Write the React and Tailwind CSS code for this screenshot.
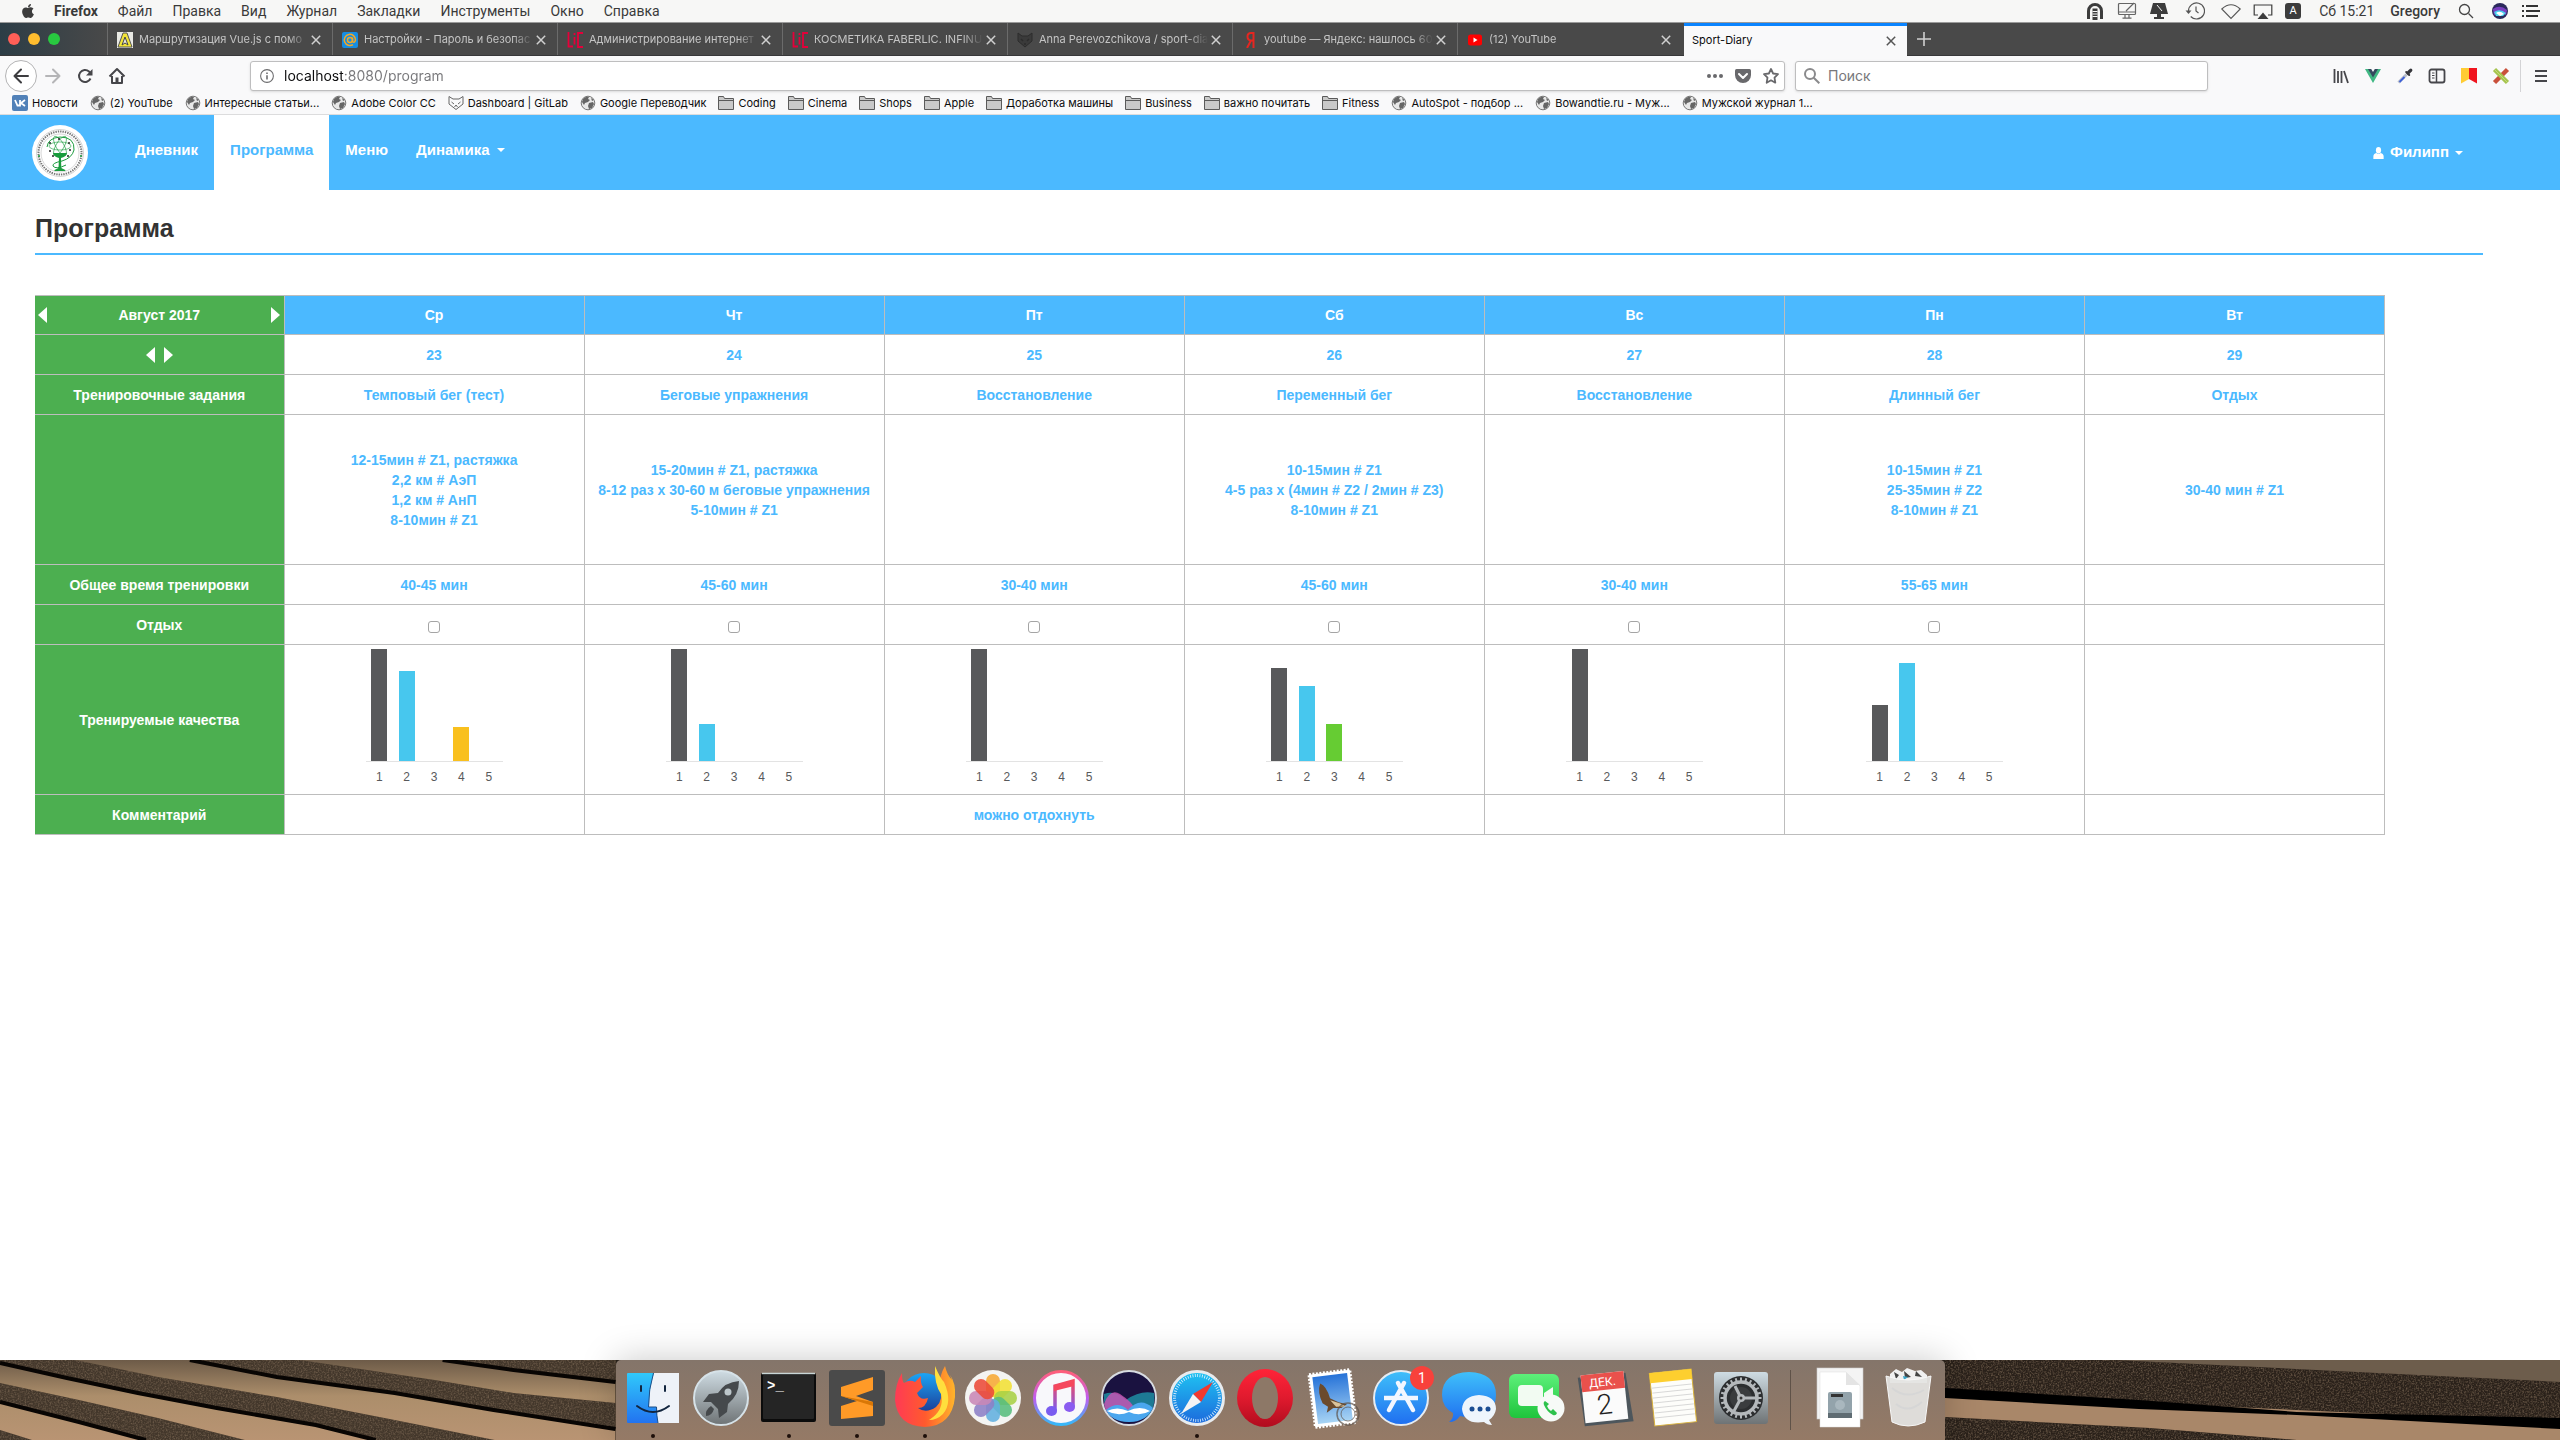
import React from "react";
import { FaApple } from "react-icons/fa";

const MENU = ["Файл", "Правка", "Вид", "Журнал", "Закладки", "Инструменты", "Окно", "Справка"];

/* ---------- menu bar ---------- */

function StatusIcons() {
  const c = "h-[18px] w-5";
  return (
    <div className="flex items-center gap-3 text-[#3c3c3c]">
      <svg viewBox="0 0 20 18" className={c} fill="none" stroke="#3c3c3c">
        <path d="M3.500 17V9a6.500 6.500 0 0 1 13 0v8" strokeWidth="3" />
        <path d="M10 6.500V18" strokeWidth="5" />
        <path d="M7.500 9.500h5M7.500 12h5M7.500 14.500h5" stroke="#f6f6f6" strokeWidth="1" />
      </svg>
      <svg viewBox="0 0 20 18" className={c} fill="none" stroke="#666" strokeWidth="1.2">
        <rect x="1.5" y="1.5" width="17" height="11" rx="1" />
        <path d="M2 10h16M8 12.5v3M12 12.5v3M5.5 16.2h9M9 9l8-8" />
      </svg>
      <svg viewBox="0 0 20 18" className={c} fill="#3c3c3c">
        <path d="M4 1h12l3 11H1z" />
        <path d="M8 12h4v3h3v2H5v-2h3z" />
        <path d="M8 3l5 6" stroke="#f6f6f6" />
      </svg>
      <svg viewBox="0 0 20 18" className="ml-1 h-[18px] w-5" fill="none" stroke="#555" strokeWidth="1.2">
        <path d="M3.5 9a8 8 0 1 1 2.2 5.5M11 4.5V9l2.5 2" />
        <path d="M.5 8.5h6l-3 3.5z" fill="#555" stroke="none" />
      </svg>
      <svg viewBox="0 0 20 18" className="ml-1 h-[18px] w-5" fill="none" stroke="#555" strokeWidth="1.1">
        <path d="M.8 7Q10-1.500 19.200 7L10 16.500z" />
      </svg>
      <svg viewBox="0 0 20 18" className={c} fill="none" stroke="#3c3c3c" strokeWidth="1.200">
        <path d="M5 13H1.200V3h17.600v10H15" />
        <path d="M10 10.500l5.500 6.500h-11z" fill="#3c3c3c" stroke="none" />
      </svg>
      <span className="flex size-4 items-center justify-center rounded-[3px] bg-[#3c3c3c] text-[11px] leading-4 text-white">A</span>
    </div>
  );
}

function MenuBar() {
  return (
    <div className="flex h-[23px] items-center border-b border-[#9a9a9a] bg-[#f7f7f6] pr-5 pl-5 text-[14px] leading-[22px] text-[#3a3a3a]">
      <FaApple className="size-4 shrink-0 text-[#3c3c3c]" />
      <nav className="ml-[18px] flex gap-5 font-['Roboto','Liberation_Sans',sans-serif]">
        <button className="font-bold">Firefox</button>
        {MENU.map((m) => (
          <button key={m}>{m}</button>
        ))}
      </nav>
      <div className="ml-auto flex items-center font-['Roboto','Liberation_Sans',sans-serif]">
        <StatusIcons />
        <span className="ml-[18px]">Сб 15:21</span>
        <span className="ml-4 font-medium">Gregory</span>
        <svg viewBox="0 0 16 16" className="ml-[18px] size-4" fill="none" stroke="#444" strokeWidth="1.300">
          <circle cx="6.500" cy="6.500" r="5" />
          <path d="M10.500 10.500L15 15" />
        </svg>
        <svg viewBox="0 0 16 16" className="ml-[18px] size-4">
          <circle cx="8" cy="8" r="8" fill="#2b2a5c" />
          <path d="M1 6q7-5 14 1l-1 5q-6-5-12 0z" fill="#7a3fc0" />
          <path d="M2 9q6-4 12 1l-3 3H4z" fill="#49d0ee" />
          <path d="M4 10q4-3 8 1l-4 2z" fill="#fff" />
        </svg>
        <svg viewBox="0 0 18 12" className="ml-[14px] h-3 w-[18px]" stroke="#333" strokeWidth="1.800">
          <path d="M0 1h2M4 1h12M0 6h2M4 6h14M0 11h2M4 11h12" />
        </svg>
      </div>
    </div>
  );
}

/* ---------- tabs ---------- */

const FavVue = (
  <svg viewBox="0 0 16 16" className="size-4 shrink-0">
    <rect width="16" height="16" fill="#e9e9e4" />
    <path d="M6 1h4l5 14H1z" fill="#f3e53a" stroke="#555" />
    <path d="M8 5l3 8-3-2-3 2z" fill="#e9e9e4" stroke="#444" />
  </svg>
);
const FavMail = (
  <svg viewBox="0 0 16 16" className="size-4 shrink-0">
    <rect width="16" height="16" rx="2" fill="#168de2" />
    <g fill="none" stroke="#f7a823" strokeWidth="1.500">
      <circle cx="8" cy="8" r="2.500" />
      <path d="M10.500 5.500v4q2 2 3-1.500a5.600 5.600 0 1 0-2.500 4.600" />
    </g>
  </svg>
);
const FavLic = (
  <svg viewBox="0 0 16 16" className="size-4 shrink-0" fill="none" stroke="#e4003a" strokeWidth="1.800">
    <path d="M1.500 0v14.500H6M7.500 5v7.500M7.500 1v2M16 1h-5v14h5" />
  </svg>
);
const FavFox = (
  <svg viewBox="0 0 16 16" className="size-4 shrink-0" fill="none" stroke="#2c2c2c">
    <path d="M1 1l4 3h6l4-3v8l-7 6-7-6z" fill="#3a3a3a" />
    <path d="M4 7l2 2M12 7l-2 2M7 12h2" strokeWidth="1.500" />
  </svg>
);
const FavYa = (
  <svg viewBox="0 0 16 16" className="size-4 shrink-0" fill="none" stroke="#e52620" strokeWidth="2">
    <path d="M11.500 16V1H9Q5.500 1 5.500 4.500T9 8.500h2M9 8.500L5 16" />
  </svg>
);
const FavYt = (
  <svg viewBox="0 0 16 16" className="size-4 shrink-0">
    <rect x="1" y="2.500" width="14" height="11" rx="2.500" fill="#f00" />
    <path d="M6.500 5.500v5l4-2.500z" fill="#fff" />
  </svg>
);

const TABS = [
  { icon: FavVue, title: "Маршрутизация Vue.js с помо" },
  { icon: FavMail, title: "Настройки - Пароль и безопас" },
  { icon: FavLic, title: "Администрирование интернет" },
  { icon: FavLic, title: "КОСМЕТИКА FABERLIC. INFINU" },
  { icon: FavFox, title: "Anna Perevozchikova / sport-dia" },
  { icon: FavYa, title: "youtube — Яндекс: нашлось 60" },
  { icon: FavYt, title: "(12) YouTube" },
];

function CloseX({ label, className }) {
  return (
    <button aria-label={label} className="flex size-4 shrink-0 items-center justify-center">
      <svg viewBox="0 0 10 10" className={className} stroke="currentColor" strokeWidth="1.500">
        <path d="M.8.8l8.400 8.400M9.200.8L.8 9.200" />
      </svg>
    </button>
  );
}

function TabBar() {
  return (
    <div className="flex h-[33px] border-b border-[#38383a] bg-[#494949] text-[11px]">
      <div className="flex w-[107px] shrink-0 items-center gap-2 bg-linear-to-r from-[#2c3d46] to-[#494949] pl-2">
        <button aria-label="Закрыть" className="size-3 rounded-full bg-[#ff5f57]" />
        <button aria-label="Свернуть" className="size-3 rounded-full bg-[#ffbd2e]" />
        <button aria-label="Развернуть" className="size-3 rounded-full bg-[#28c940]" />
      </div>
      {TABS.map((t, i) => (
        <div key={i} className="flex w-[225px] min-w-0 items-center border-l border-[#6b6b6b] pt-px pr-2 pl-[9px] text-[#c4c4c4]">
          {t.icon}
          <span className="ml-[6px] flex-1 overflow-hidden mask-r-from-88% whitespace-nowrap">{t.title}</span>
          <CloseX label="Закрыть вкладку" className="size-[10px] text-[#d0d0d0]" />
        </div>
      ))}
      <div className="-mb-px ml-[2px] flex w-[223px] min-w-0 items-center border-t-[3px] border-[#0a84ff] bg-[#f9f9fa] pr-2 pb-px pl-2 text-[#0c0c0d]">
        <span className="flex-1">Sport-Diary</span>
        <CloseX label="Закрыть вкладку" className="size-[10px] text-[#555]" />
      </div>
      <button aria-label="Новая вкладка" className="ml-[10px] flex items-center text-[#d0d0d0]">
        <svg viewBox="0 0 14 14" className="size-[14px]" stroke="currentColor" strokeWidth="1.600">
          <path d="M7 0v14M0 7h14" />
        </svg>
      </button>
    </div>
  );
}

/* ---------- toolbar ---------- */

function ToolButton({ label, children }) {
  return (
    <button aria-label={label} className="flex size-8 shrink-0 items-center justify-center">
      <svg viewBox="0 0 16 16" className="size-4 overflow-visible" fill="none" stroke="#46464a" strokeWidth="2">
        {children}
      </svg>
    </button>
  );
}

function Toolbar() {
  return (
    <div className="flex h-[39px] items-center bg-[#f9f9fa] pr-[3px] pl-[5px]">
      <button aria-label="Назад" className="flex size-8 shrink-0 items-center justify-center rounded-full border border-[#b4b4b5] bg-white">
        <svg viewBox="0 0 16 16" className="size-4" fill="none" stroke="#3d3d40" strokeWidth="2" strokeLinecap="round" strokeLinejoin="round">
          <path d="M15 8H1.500M8 1.500L1.500 8 8 14.500" />
        </svg>
      </button>
      <ToolButton label="Вперёд">
        <path d="M1 8h13.500M8 1.500L14.500 8 8 14.500" stroke="#b5b5b7" strokeLinecap="round" strokeLinejoin="round" />
      </ToolButton>
      <ToolButton label="Обновить">
        <path d="M13.500 10.500A6 6 0 1 1 12 3.500L14 6" />
        <path d="M15.500 1v6.500H9z" fill="#46464a" stroke="none" />
      </ToolButton>
      <ToolButton label="Домой">
        <path d="M.5 8.500L8 1l7.500 7.500M3 8v7h10V8" strokeLinejoin="round" />
        <path d="M8 15V9.500" strokeWidth="3" />
      </ToolButton>

      <div className="ml-[117px] flex h-[30px] min-w-0 flex-1 items-center rounded-[3px] border border-[#bebebf] bg-white pr-[5px] pl-[9px] shadow-sm">
        <svg viewBox="0 0 16 16" className="size-[14px] shrink-0" fill="none" stroke="#6b6b6d" strokeWidth="1.200">
          <circle cx="8" cy="8" r="7.300" />
          <path d="M8 7v5M8 4v1.800" strokeWidth="1.800" />
        </svg>
        <input
          aria-label="Адрес"
          defaultValue="localhost:8080/program"
          className="ml-[10px] min-w-0 flex-1 bg-[linear-gradient(90deg,#0c0c0d_59px,#77777a_59px)] bg-clip-text text-[14px] leading-5 text-transparent outline-none"
        />
        <div className="flex items-center gap-3 text-[#69696c]">
          <button aria-label="Действия">
            <svg viewBox="0 0 16 16" className="size-4" fill="currentColor">
              <circle cx="2" cy="8" r="2" />
              <circle cx="8" cy="8" r="2" />
              <circle cx="14" cy="8" r="2" />
            </svg>
          </button>
          <button aria-label="Pocket">
            <svg viewBox="0 0 16 16" className="size-4">
              <path d="M1.500 1h13Q16 1 16 2.500V7a8 8 0 0 1-16 0V2.500Q0 1 1.500 1z" fill="currentColor" />
              <path d="M4 6l4 4 4-4" fill="none" stroke="#fff" strokeWidth="2" strokeLinecap="round" strokeLinejoin="round" />
            </svg>
          </button>
          <button aria-label="В закладки">
            <svg viewBox="0 0 16 16" className="size-4" fill="none" stroke="currentColor" strokeWidth="1.800" strokeLinejoin="round">
              <path d="M8 1l2.100 4.500 4.900.7-3.500 3.500.8 5L8 12.300 3.700 14.700l.8-5L1 6.200l4.900-.7z" />
            </svg>
          </button>
        </div>
      </div>

      <div className="ml-[10px] flex h-[30px] w-[413px] items-center rounded-[3px] border border-[#bebebf] bg-white pl-2 shadow-sm">
        <svg viewBox="0 0 16 16" className="size-4 shrink-0" fill="none" stroke="#8a8a8c" strokeWidth="2">
          <circle cx="6" cy="6" r="5" />
          <path d="M9.700 9.700L15.300 15.300" />
        </svg>
        <input aria-label="Поиск" placeholder="Поиск" className="ml-2 min-w-0 flex-1 text-[14px] leading-5 outline-none placeholder:text-[#77777a]" />
      </div>

      <div className="ml-[117px] flex items-center">
        <ToolButton label="Библиотека">
          <path d="M1.500 1v14M5 3v12M8.500 3v12M11 3l4 12" strokeWidth="1.800" />
        </ToolButton>
        <ToolButton label="Vue">
          <path d="M0 1h4l4 7 4-7h4L8 15z" fill="#41b883" stroke="none" />
          <path d="M3 1h3.200L8 4l1.800-3H13L8 9.500z" fill="#35495e" stroke="none" />
        </ToolButton>
        <ToolButton label="Пипетка">
          <path d="M1.500 14.500l8-8" stroke="#b9bec9" strokeWidth="3" />
          <path d="M2.500 14l5-5" stroke="#3f62d8" strokeWidth="1.800" />
          <path d="M9.200 4l3 3" stroke="#37373c" strokeWidth="2" strokeLinecap="round" />
          <path d="M11 5L13.800 2.200" stroke="#37373c" strokeWidth="3.200" strokeLinecap="round" />
        </ToolButton>
        <ToolButton label="Боковая панель">
          <rect x=".5" y="1.500" width="15" height="13" rx="2" strokeWidth="1.800" />
          <path d="M7.500 2v12" strokeWidth="1.500" />
          <path d="M3 5h2.500M3 7.500h2.500M3 10h2.500" strokeWidth="1" />
        </ToolButton>
        <ToolButton label="Закладка">
          <path d="M0 0h8v11L0 15.500z" fill="#ffcc33" stroke="none" />
          <path d="M8 0h8v15.500L8 11z" fill="#f0141e" stroke="none" />
        </ToolButton>
        <ToolButton label="Расширение">
          <path d="M1.500 14.500L14.500 1.500" stroke="#c9503a" strokeWidth="4.500" />
          <path d="M1.500 1.500l13 13" stroke="#a6c44e" strokeWidth="4.500" />
          <path d="M2 2l12 12" stroke="#c3d97a" strokeWidth="1" />
        </ToolButton>
      </div>
      <div className="mr-1 ml-[3px] h-8 w-px bg-[#d4d4d6]" />
      <ToolButton label="Меню">
        <path d="M2 3h12M2 8h12M2 13h12" />
      </ToolButton>
    </div>
  );
}

/* ---------- bookmarks ---------- */

const Globe = (
  <svg viewBox="0 0 16 16" className="size-4 shrink-0">
    <circle cx="8" cy="8" r="6.800" fill="#e8e8e8" stroke="#777" strokeWidth="1" />
    <path d="M3 4q3-3 6-2L8 4l2 1-2 2-3 1-1 2-2-3zM9 8l4-1 1 2-2 4-3 1-1-3zM11 3l3 2-2 1z" fill="#666" />
  </svg>
);
const Folder = (
  <svg viewBox="0 0 16 16" className="size-4 shrink-0" fill="#c9c9c9" stroke="#5a5a5a" strokeWidth="1">
    <path d="M.5 14.500v-13h5l1 2h9v11z" />
    <path d="M.5 5.500h15" />
  </svg>
);
const Vk = (
  <svg viewBox="0 0 16 16" className="size-4 shrink-0">
    <rect width="16" height="16" rx="2" fill="#5181b8" />
    <path d="M3 5l2.500 5.500H8V5M13 5L9 8l4 3" fill="none" stroke="#fff" strokeWidth="1.800" />
  </svg>
);
const Gitlab = (
  <svg viewBox="0 0 16 16" className="size-4 shrink-0" fill="none" stroke="#666" strokeWidth="1">
    <path d="M1 1.500L5 4h6l4-2.500V9l-7 5.500L1 9zM3.500 7L6 9M12.500 7L10 9M6.500 12L8 10l1.500 2" />
  </svg>
);

const BOOKMARKS = [
  [Vk, "Новости"],
  [Globe, "(2) YouTube"],
  [Globe, "Интересные статьи..."],
  [Globe, "Adobe Color CC"],
  [Gitlab, "Dashboard | GitLab"],
  [Globe, "Google Переводчик"],
  [Folder, "Coding"],
  [Folder, "Cinema"],
  [Folder, "Shops"],
  [Folder, "Apple"],
  [Folder, "Доработка машины"],
  [Folder, "Business"],
  [Folder, "важно почитать"],
  [Folder, "Fitness"],
  [Globe, "AutoSpot - подбор ..."],
  [Globe, "Bowandtie.ru - Муж..."],
  [Globe, "Мужской журнал 1..."],
];

function Bookmarks() {
  return (
    <div className="flex h-5 items-center gap-3 border-b border-[#dcdcdd] bg-[#f9f9fa] pb-[4px] pl-3 text-[11px] leading-4 text-[#0c0c0d]">
      {BOOKMARKS.map(([icon, label]) => (
        <button key={label} className="flex items-center gap-1 whitespace-nowrap">
          {icon}
          {label}
        </button>
      ))}
    </div>
  );
}

/* ---------- site ---------- */

function Logo() {
  return (
    <svg viewBox="0 0 56 56" className="size-14 shrink-0">
      <circle cx="28" cy="28" r="28" fill="#fff" />
      <circle cx="28" cy="28" r="23.500" fill="none" stroke="#b9b9b9" strokeWidth=".6" />
      <circle cx="28" cy="28" r="21.500" fill="none" stroke="#777" strokeWidth="2" strokeDasharray="1.400 1" />
      <circle cx="28" cy="28" r="19" fill="none" stroke="#bbb" strokeWidth=".6" />
      <circle cx="7" cy="31" r="1" fill="#1a9c3d" />
      <circle cx="49" cy="31" r="1" fill="#1a9c3d" />
      <g fill="none" stroke="#1a9c3d" strokeWidth=".6">
        <ellipse cx="28" cy="21" rx="11" ry="4" />
        <ellipse cx="28" cy="21" rx="11" ry="4" transform="rotate(60 28 21)" />
        <ellipse cx="28" cy="21" rx="11" ry="4" transform="rotate(120 28 21)" />
        <path d="M15 22Q16 13 28 12q15 0 14 13-2 8-12 11-10 2-9 5 3 4 13-1" strokeWidth="1" />
      </g>
      <path d="M21 28h14q-1 4-6 5l.3 10 4 2v1H22.500v-1l4-2 .5-10q-5-1-6-5z" fill="#1a9c3d" />
      <g fill="#222">
        <circle cx="18" cy="18" r="1" />
        <circle cx="27" cy="14" r="1" />
        <circle cx="37" cy="18" r="1" />
        <circle cx="38" cy="25" r="1" />
        <circle cx="18" cy="26" r="1" />
        <circle cx="21" cy="31" r="1" />
        <circle cx="36" cy="31" r="1" />
      </g>
    </svg>
  );
}

function Caret() {
  return (
    <svg viewBox="0 0 8 4" className="h-1 w-2" fill="currentColor">
      <path d="M0 0h8L4 4z" />
    </svg>
  );
}

function SiteNav() {
  return (
    <header className="flex h-[75px] bg-[#4bb9ff] pr-[97px] pl-8 text-[15px] font-bold text-white">
      <a href="#home" aria-label="Sport-Diary" className="flex items-center">
        <Logo />
      </a>
      <nav className="ml-[31px] flex leading-[70px]">
        <a href="#diary" className="px-4">Дневник</a>
        <a href="#program" className="bg-white px-4 text-[#4bb9ff]">Программа</a>
        <a href="#menu" className="px-4">Меню</a>
        <button className="flex items-center gap-[7px] px-3 pb-[5px]">
          Динамика
          <Caret />
        </button>
      </nav>
      <button className="ml-auto flex items-center gap-[6px]">
        <svg viewBox="0 0 12 14" className="h-3 w-[11px]" fill="currentColor">
          <ellipse cx="6" cy="3.800" rx="3" ry="3.800" />
          <path d="M0 14v-3q0-3 3.500-4 2.500 2 5 0Q12 8 12 11v3z" />
        </svg>
        Филипп
        <Caret />
      </button>
    </header>
  );
}

const DAYS = [
  { d: "Ср", n: 23, t: "Темповый бег (тест)", p: ["12-15мин # Z1, растяжка", "2,2 км # АэП", "1,2 км # АнП", "8-10мин # Z1"], time: "40-45 мин", bars: [112, 90, 0, 34, 0] },
  { d: "Чт", n: 24, t: "Беговые упражнения", p: ["15-20мин # Z1, растяжка", "8-12 раз x 30-60 м беговые упражнения", "5-10мин # Z1"], time: "45-60 мин", bars: [112, 37, 0, 0, 0] },
  { d: "Пт", n: 25, t: "Восстановление", p: [], time: "30-40 мин", bars: [112, 0, 0, 0, 0], note: "можно отдохнуть" },
  { d: "Сб", n: 26, t: "Переменный бег", p: ["10-15мин # Z1", "4-5 раз x (4мин # Z2 / 2мин # Z3)", "8-10мин # Z1"], time: "45-60 мин", bars: [93, 75, 37, 0, 0] },
  { d: "Вс", n: 27, t: "Восстановление", p: [], time: "30-40 мин", bars: [112, 0, 0, 0, 0] },
  { d: "Пн", n: 28, t: "Длинный бег", p: ["10-15мин # Z1", "25-35мин # Z2", "8-10мин # Z1"], time: "55-65 мин", bars: [56, 98, 0, 0, 0] },
  { d: "Вт", n: 29, t: "Отдых", p: ["30-40 мин # Z1"] },
];

const BAR_COLORS = ["bg-[#58595b]", "bg-[#47c7ee]", "bg-[#66cc33]", "bg-[#f9c01e]", "bg-[#e8452c]"];

function Chart({ bars }) {
  return (
    <div className="mx-auto w-[137px] pt-[2px] text-[12px] font-normal text-[#58595b]">
      <div className="grid h-[113px] grid-cols-5 items-end justify-items-center border-b border-[#e3e3e3]">
        {bars.map((h, i) => (
          <div key={i} className={`w-4 ${BAR_COLORS[i]}`} style={{ height: h }} />
        ))}
      </div>
      <div className="grid h-[30px] grid-cols-5 text-center leading-[30px]">
        {bars.map((_, i) => (
          <span key={i}>{i + 1}</span>
        ))}
      </div>
    </div>
  );
}

function Arrow({ dir, label }) {
  return (
    <button aria-label={label}>
      <svg viewBox="0 0 9 16" className="block h-4 w-[9px]" fill="#fff">
        <path d={dir === "left" ? "M9 0v16L0 8z" : "M0 0v16l9-8z"} />
      </svg>
    </button>
  );
}

const CELL = "border border-[#bdbdbd] p-0";
const HEAD = "border-y border-r border-[#bdbdbd] bg-[#4caf50] p-0 text-white font-bold";

function Program() {
  return (
    <main className="flex-1 bg-white pr-[77px] pb-8 pl-[35px]">
      <h1 className="border-b-2 border-[#4bb9ff] pt-6 pb-[10px] text-[25px] leading-[29px] font-bold text-[#333]">Программа</h1>
      <table className="mt-10 w-[96%] table-fixed border-collapse text-center text-[14px] leading-5 font-bold text-[#4bb9ff]">
        <colgroup>
          <col className="w-[249px]" />
          <col span="7" />
        </colgroup>
        <thead>
          <tr className="h-[39px] text-white">
            <th scope="col" className={HEAD}>
              <div className="flex items-center justify-between px-[3px]">
                <Arrow dir="left" label="Предыдущий месяц" />
                Август 2017
                <Arrow dir="right" label="Следующий месяц" />
              </div>
            </th>
            {DAYS.map((x) => (
              <th key={x.n} scope="col" className="border border-[#bdbdbd] bg-[#4bb9ff] p-0">{x.d}</th>
            ))}
          </tr>
        </thead>
        <tbody>
          <tr className="h-10">
            <th scope="row" className={HEAD}>
              <div className="flex justify-center gap-[9px]">
                <Arrow dir="left" label="Предыдущая неделя" />
                <Arrow dir="right" label="Следующая неделя" />
              </div>
            </th>
            {DAYS.map((x) => <td key={x.n} className={CELL}>{x.n}</td>)}
          </tr>
          <tr className="h-10">
            <th scope="row" className={HEAD}>Тренировочные задания</th>
            {DAYS.map((x) => <td key={x.n} className={CELL}>{x.t}</td>)}
          </tr>
          <tr className="h-[150px]">
            <th scope="row" className={HEAD} aria-label="План" />
            {DAYS.map((x) => (
              <td key={x.n} className={CELL}>
                {x.p.map((l) => <p key={l}>{l}</p>)}
              </td>
            ))}
          </tr>
          <tr className="h-10">
            <th scope="row" className={HEAD}>Общее время тренировки</th>
            {DAYS.map((x) => <td key={x.n} className={CELL}>{x.time}</td>)}
          </tr>
          <tr className="h-10">
            <th scope="row" className={HEAD}>Отдых</th>
            {DAYS.map((x) => (
              <td key={x.n} className={CELL}>
                {x.bars && (
                  <input type="checkbox" aria-label={`Отдых, ${x.n}`} className="mx-auto mt-1 block size-3 appearance-none rounded-[3px] border border-[#a5a5a5] bg-white checked:bg-[#4bb9ff]" />
                )}
              </td>
            ))}
          </tr>
          <tr className="h-[150px]">
            <th scope="row" className={HEAD}>Тренируемые качества</th>
            {DAYS.map((x) => <td key={x.n} className={CELL}>{x.bars && <Chart bars={x.bars} />}</td>)}
          </tr>
          <tr className="h-10">
            <th scope="row" className={HEAD}>Комментарий</th>
            {DAYS.map((x) => <td key={x.n} className={CELL}>{x.note}</td>)}
          </tr>
        </tbody>
      </table>
    </main>
  );
}

/* ---------- desktop and dock ---------- */

function WallpaperLeft() {
  return (
    <svg viewBox="0 0 616 80" preserveAspectRatio="none" className="h-full min-w-0 flex-1">
      <defs>
        <linearGradient id="sand" x1="0" y1="0" x2="0" y2="1">
          <stop offset="0" stopColor="#6d5b48" />
          <stop offset=".45" stopColor="#ac8e6b" />
          <stop offset="1" stopColor="#b99473" />
        </linearGradient>
        <filter id="grain" x="0" y="0" width="100%" height="100%" colorInterpolationFilters="sRGB">
          <feTurbulence type="fractalNoise" baseFrequency=".6" numOctaves="2" seed="4" result="n" />
          <feColorMatrix in="n" type="matrix" values="0 0 0 0 .5  0 0 0 0 .42  0 0 0 0 .34  1.600 0 0 0 -.65" result="m" />
          <feComposite in="m" in2="SourceGraphic" operator="in" result="g" />
          <feMerge>
            <feMergeNode in="SourceGraphic" />
            <feMergeNode in="g" />
          </feMerge>
        </filter>
      </defs>
      <rect width="616" height="80" fill="url(#sand)" />
      <g fill="#43372b" filter="url(#grain)">
        <path d="M0 0h75q40 8 83 17l119 20 118 23 100 20H376L316 65 217 48 138 33 67 18 0 3z" />
        <path d="M190 0h110l135 20 79 13 102 10v26L494 50 395 33 277 17z" />
        <path d="M443 0h173v22L514 10z" />
        <path d="M0 23l79 17 79 18 87 22h-99L79 62 0 42z" />
        <path d="M0 70l32 10H0z" />
      </g>
      <g fill="none" stroke="#080503" strokeWidth="4">
        <path d="M0 3l67 15 71 15 79 15 99 17 60 15" />
        <path d="M190 0l87 17 118 16 99 17 122 19" />
        <path d="M443 0l71 10 102 12" />
        <path d="M0 42l79 20 67 18" />
      </g>
    </svg>
  );
}

function WallpaperRight() {
  return (
    <svg viewBox="0 0 616 80" preserveAspectRatio="none" className="h-full min-w-0 flex-1">
      <rect width="616" height="80" fill="#a98769" />
      <path d="M160 0h456v24L391 12z" fill="#6d5d4c" />
      <g fill="#2a211a" filter="url(#grain)">
        <path d="M0 0h170l221 11 225 11v40L0 34z" />
        <path d="M0 57l205 11 147 12H0z" />
      </g>
      <path d="M0 28l194 12 158 12 264 6v11L352 55 194 49 0 38z" fill="#000" />
    </svg>
  );
}

function Gear() {
  const teeth = Array.from({ length: 24 }, (_, i) => i * 15);
  return (
    <g>
      <circle cx="34" cy="38" r="22" fill="#2c2e30" />
      {teeth.map((a) => (
        <rect key={a} x="33" y="17.500" width="2" height="4" fill="#b4b8bb" transform={`rotate(${a} 34 38)`} />
      ))}
      <circle cx="34" cy="38" r="16" fill="none" stroke="#b4b8bb" strokeWidth="3.500" />
      <circle cx="34" cy="38" r="11" fill="#3a3c3e" />
      <path d="M34 38L28 26M34 38h15M34 38L27 51" stroke="#b4b8bb" strokeWidth="3" />
      <circle cx="34" cy="38" r="4" fill="#b4b8bb" />
      <circle cx="34" cy="38" r="1.500" fill="#333" />
    </g>
  );
}

const PETALS = ["#f7a833", "#f3e034", "#a8d046", "#58bd7c", "#62afdf", "#8c7fc6", "#c887b6", "#ec4a38"];

const APPS = [
  { name: "Finder", run: true, art: (
    <g>
      <rect x="8" y="13" width="52" height="50" rx="1" fill="url(#finder)" />
      <path d="M34 13h26v50H39q-1-7-1-9 0-3 0-7h-8q0-19 5-34z" fill="#eef2f8" />
      <path d="M34.500 13q-5 16-5 34h8q0 9 1.500 16" fill="none" stroke="#1d4f87" strokeWidth="1" />
      <path d="M22 26v5M46 26v5" stroke="#12263f" strokeWidth="2" strokeLinecap="round" />
      <path d="M18 46q16 12 32 0" fill="none" stroke="#12263f" strokeWidth="2" strokeLinecap="round" />
    </g>
  ) },
  { name: "Launchpad", art: (
    <g>
      <circle cx="34" cy="38" r="27" fill="url(#metal)" stroke="#d6e2e8" strokeWidth="2" />
      <path d="M52 21q-14 1-21 12l-9 1-6 8h8l7 7 1 9 8-6 1-8q11-9 11-23z" fill="#45494c" />
      <circle cx="41" cy="32" r="3.500" fill="#bcc6ca" />
      <path d="M24 46q-6 4-5 10 6 0 8-7z" fill="#45494c" />
    </g>
  ) },
  { name: "Терминал", run: true, art: (
    <g>
      <rect x="6" y="13" width="55" height="49" rx="2" fill="#0b0b0b" />
      <rect x="8" y="15" width="51" height="44" rx="1" fill="#252525" />
      <path d="M7 13.500h53" stroke="#c9d6d6" strokeWidth="1.500" />
      <text x="12" y="30" fill="#fff" fontSize="14" fontWeight="700" fontFamily="Liberation Mono, monospace">&gt;_</text>
    </g>
  ) },
  { name: "Sublime Text", run: true, art: (
    <g>
      <rect x="6" y="10" width="56" height="56" rx="3" fill="#4a4a4a" />
      <path d="M18 27l32-10v13l-17 6 17 6v14L18 59V46l16-5-16-5z" fill="#ff9a27" />
      <path d="M18 36l32 6v4l-16-5z" fill="#d97706" />
    </g>
  ) },
  { name: "Firefox", run: true, art: (
    <g>
      <circle cx="33" cy="36" r="23" fill="url(#sea)" />
      <path d="M11 13q0 8 2 10 6-4 11-1l6-6q-1 7 2 11l-6 6q3 8 11 5-2 10-10 10 8 6 18-1 8-7 4-21-1-10 5-20 2 9 7 14l-2-5q6 8 5 22-3 29-30 30Q6 66 4 40 4 24 11 13z" fill="url(#flame)" />
      <path d="M44 6q5 12 9 16 9 20-1 32-6 6-14 6 16-10 12-26-7-10-6-28z" fill="#ffdf3d" />
    </g>
  ) },
  { name: "Фото", art: (
    <g>
      <circle cx="34" cy="38" r="28" fill="#f4f4f2" />
      {PETALS.map((c, i) => (
        <rect key={c} x="27" y="14" width="14" height="23" rx="7" fill={c} fillOpacity=".88" transform={`rotate(${i * 45} 34 38)`} />
      ))}
    </g>
  ) },
  { name: "iTunes", art: (
    <g>
      <circle cx="34" cy="38" r="26.500" fill="#f8f8fb" stroke="url(#tunes)" strokeWidth="3" />
      <path d="M28 51V26l18-5v26" fill="none" stroke="url(#note)" strokeWidth="3.500" />
      <path d="M27 25l20-5v6l-20 5z" fill="#f5485d" />
      <ellipse cx="24.500" cy="51" rx="5.500" ry="5" fill="#7a5cf0" />
      <ellipse cx="42.500" cy="47" rx="5.500" ry="5" fill="#8a5cf0" />
    </g>
  ) },
  { name: "Siri", art: (
    <g>
      <circle cx="34" cy="38" r="27" fill="#1a1240" stroke="#d8dce2" strokeWidth="2" />
      <path d="M9 34q12-4 22 6 14-10 28-7 2 12-5 22-20 14-40 0-6-9-5-21z" fill="#1f9db0" fillOpacity=".75" />
      <path d="M9 44q6-16 16-10 12 8 14 14-6 14-20 10-9-5-10-14z" fill="#d052b4" fillOpacity=".8" />
      <path d="M11 50q12-10 22 0 12-14 25-2-7 14-24 14t-23-12z" fill="#4aa6ee" />
      <path d="M12 51q10-5 21 0 12-6 22 0-10 6-21 1-11 5-22-1z" fill="#fff" />
    </g>
  ) },
  { name: "Safari", run: true, art: (
    <g>
      <circle cx="34" cy="38" r="26.500" fill="url(#sea2)" stroke="#e8ebee" strokeWidth="3" />
      <circle cx="34" cy="38" r="22.500" fill="none" stroke="#dff3ff" strokeWidth="3" strokeDasharray=".8 1.600" />
      <path d="M50 22L38 42l-8-8z" fill="#f0392f" />
      <path d="M18 54l12-20 8 8z" fill="#f4f4f4" />
    </g>
  ) },
  { name: "Opera", art: (
    <g>
      <ellipse cx="34" cy="38" rx="28" ry="29" fill="url(#opera)" />
      <ellipse cx="34" cy="38" rx="13" ry="21" fill="#8d7867" />
    </g>
  ) },
  { name: "Почта", art: (
    <g>
      <g transform="rotate(-7 34 38)">
        <rect x="13" y="12" width="41" height="53" fill="#fff" stroke="#fff" strokeWidth="3" strokeDasharray="2 1.500" />
        <rect x="16" y="15" width="35" height="47" fill="url(#sky)" />
        <path d="M23 22q6 3 8 16l8 5 8 3-6 3-8-1-7 4 2-6-5-4q-4-12 0-20z" fill="#6b4a2c" />
        <path d="M31 40l9 4 6 4-10-1z" fill="#d9c39b" />
      </g>
      <circle cx="49" cy="54" r="11" fill="none" stroke="#5c5148" strokeWidth="1.500" strokeOpacity=".7" />
      <circle cx="49" cy="54" r="7" fill="none" stroke="#5c5148" strokeOpacity=".7" />
    </g>
  ) },
  { name: "App Store", art: (
    <g>
      <circle cx="34" cy="38" r="27" fill="url(#store)" stroke="#e6ecf2" strokeWidth="2" />
      <g stroke="#f2f7ff" strokeWidth="4.500" strokeLinecap="round">
        <path d="M37 23L22 50M31 23l15 27" />
        <path d="M17 38h34" strokeLinecap="butt" />
      </g>
      <circle cx="55" cy="18" r="12" fill="#f8413b" />
      <text x="55" y="23" textAnchor="middle" fill="#fff" fontSize="14" fontFamily="Roboto, sans-serif">1</text>
    </g>
  ) },
  { name: "Сообщения", art: (
    <g>
      <path d="M34 12q27 1 27 23T34 57q-6 0-9-1-4 6-11 6 5-4 4-9Q7 47 7 35 7 13 34 12z" fill="url(#store)" />
      <path d="M44 35q17 1 17 14-1 7-7 11l3 5q-5 0-8-3-20 3-22-13 1-13 17-14z" fill="#eef5fc" />
      <g fill="#1a4d92">
        <circle cx="37" cy="49" r="2.500" />
        <circle cx="45" cy="49" r="2.500" />
        <circle cx="53" cy="49" r="2.500" />
      </g>
    </g>
  ) },
  { name: "FaceTime", art: (
    <g>
      <rect x="6" y="14" width="50" height="44" rx="6" fill="url(#green)" />
      <rect x="15" y="25" width="25" height="21" rx="4" fill="#f2fbf2" />
      <path d="M41 33l9-6v18l-9-6z" fill="#f2fbf2" />
      <circle cx="48" cy="48" r="13.500" fill="#f7faf7" />
      <path d="M42 41q-2 1-1 4 3 7 9 10 3 1 4-2l-4-4-2 2q-3-2-4-5l2-2z" fill="#2ec24c" />
    </g>
  ) },
  { name: "Календарь", art: (
    <g transform="rotate(-6 34 38)">
      <path d="M9 15h48l3 49H11z" fill="#4d565c" />
      <rect x="12" y="13" width="43" height="48" fill="#fbfbfb" />
      <rect x="12" y="13" width="43" height="17" fill="#e9514c" />
      <text x="33" y="26" textAnchor="middle" fill="#fff" fontSize="12" fontFamily="Roboto, sans-serif">ДЕК.</text>
      <text x="33" y="54" textAnchor="middle" fill="#222" fontSize="28" fontFamily="Roboto, sans-serif" fontWeight="300">2</text>
    </g>
  ) },
  { name: "Заметки", art: (
    <g transform="rotate(-6 34 38)">
      <rect x="13" y="11" width="42" height="53" fill="#fdfdfa" stroke="#d8b23c" />
      <rect x="13" y="11" width="42" height="10" fill="#fdcf2f" />
      <path d="M14 26h40M14 31h40M14 36h40M14 41h40M14 46h40M14 51h40M14 56h40" stroke="#d0d0d0" strokeWidth=".8" />
    </g>
  ) },
  { name: "Системные настройки", art: (
    <g>
      <rect x="7" y="12" width="54" height="52" rx="3" fill="url(#metal)" />
      <Gear />
    </g>
  ) },
];

const PLACES = [
  { name: "Загрузки", art: (
    <g>
      <rect x="11" y="8" width="46" height="51" fill="#f4f4f4" stroke="#ccc" strokeWidth=".6" />
      <path d="M14 12h26l14 14v41H14z" fill="#fff" stroke="#ddd" strokeWidth=".5" />
      <path d="M40 12v13h14z" fill="#e4e4e4" />
      <rect x="22" y="32" width="24" height="26" rx="2" fill="#93a3ab" />
      <rect x="25" y="34" width="12" height="3" fill="#333" />
      <rect x="22" y="53" width="24" height="5" fill="#5f6c73" />
      <circle cx="34" cy="45" r="5" fill="#a9b7be" />
    </g>
  ) },
  { name: "Корзина", art: (
    <g>
      <path d="M16 14l6-5 6 3 5-4 8 3 6-1 6 5v8H16z" fill="#f0f0f0" />
      <path d="M20 12l5 3-3 4zM30 11l7 6-6 1zM42 11l6 6-7-1z" fill="#444" />
      <path d="M29 16l5 1-4 3z" fill="#3ba5c9" />
      <path d="M12 16q22 8 45 0l-6 46q-17 8-33 0z" fill="#e4e4e2" fillOpacity=".93" stroke="#f7f7f7" />
      <path d="M18 28q14 12 32 2M22 44q12 10 26-2" stroke="#d6d6d6" fill="none" strokeWidth="2" />
    </g>
  ) },
];

function DockItem({ app }) {
  return (
    <button aria-label={app.name} className="h-20 w-[68px]">
      <svg viewBox="0 0 68 80" className="block h-20 w-[68px]">
        {app.art}
        {app.run && <circle cx="34" cy="76" r="2" fill="#1d0f0a" />}
      </svg>
    </button>
  );
}

function Grad({ id, from, mid, to, x = 0, y = 1 }) {
  return (
    <linearGradient id={id} x1="0" y1="0" x2={x} y2={y}>
      <stop offset="0" stopColor={from} />
      {mid && <stop offset=".5" stopColor={mid} />}
      <stop offset="1" stopColor={to} />
    </linearGradient>
  );
}

function Dock() {
  return (
    <footer className="flex h-20 bg-[#2a221b]">
      <WallpaperLeft />
      <div className="relative flex shrink-0 rounded-t-[5px] bg-linear-to-b from-[#84756a] to-[#957a66] px-[3px] shadow-[0_0_36px_rgba(0,0,0,0.22)]">
        <svg className="absolute size-0" aria-hidden="true">
          <defs>
            <Grad id="finder" from="#30c9fb" to="#2273f0" />
            <Grad id="metal" from="#cfdce3" to="#6e7375" />
            <Grad id="sea" from="#1ba5f5" to="#1d2a86" />
            <Grad id="sea2" from="#1fc4f2" to="#1c68dc" />
            <Grad id="flame" from="#ff3a55" mid="#ff5a2e" to="#ffb52a" x={1} y={0} />
            <Grad id="tunes" from="#ff5f7a" mid="#c05cf0" to="#36b8f8" />
            <Grad id="note" from="#f5485d" to="#7a5cf0" />
            <Grad id="opera" from="#ff2438" mid="#e01a2e" to="#b00c1e" />
            <Grad id="sky" from="#2773d8" to="#a8d4f4" />
            <Grad id="store" from="#3fc0fa" to="#1f6ef0" />
            <Grad id="green" from="#5df07a" to="#1fc43c" />
          </defs>
        </svg>
        {APPS.map((a) => <DockItem key={a.name} app={a} />)}
        <div className="mx-[15px] my-[10px] w-px bg-[#5f5248]" />
        {PLACES.map((a) => <DockItem key={a.name} app={a} />)}
      </div>
      <WallpaperRight />
    </footer>
  );
}

export default function App() {
  return (
    <div className="flex min-h-screen flex-col overflow-x-hidden bg-white font-['Inter','Liberation_Sans',sans-serif]">
      <MenuBar />
      <TabBar />
      <Toolbar />
      <Bookmarks />
      <div className="flex flex-1 flex-col font-['Liberation_Sans',Arial,sans-serif]">
        <SiteNav />
        <Program />
      </div>
      <Dock />
    </div>
  );
}
